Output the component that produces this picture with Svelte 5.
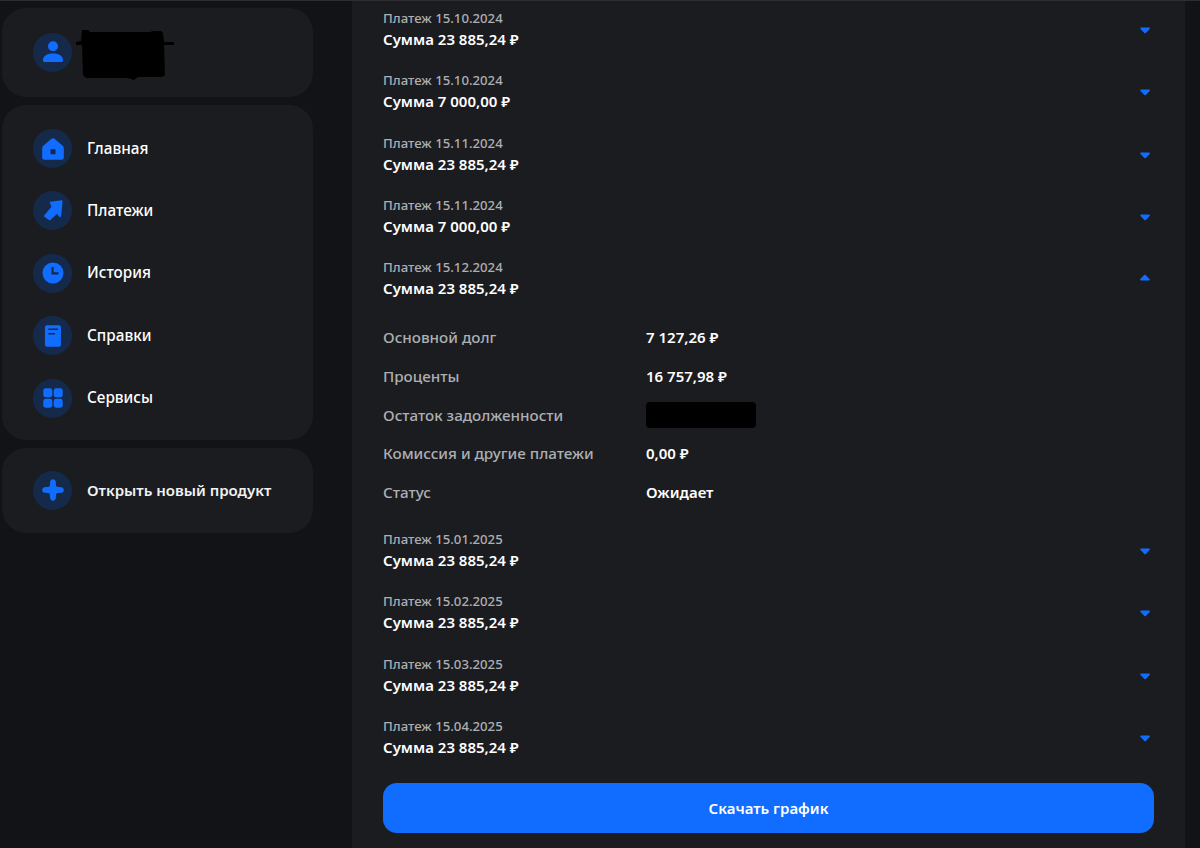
<script>
    const nav = [
        { label: 'Главная', icon: 'home' },
        { label: 'Платежи', icon: 'arrow' },
        { label: 'История', icon: 'clock' },
        { label: 'Справки', icon: 'doc' },
        { label: 'Сервисы', icon: 'grid' }
    ];

    const before = [
        ['15.10.2024', '23 885,24'],
        ['15.10.2024', '7 000,00'],
        ['15.11.2024', '23 885,24'],
        ['15.11.2024', '7 000,00']
    ];

    const after = [
        ['15.01.2025', '23 885,24'],
        ['15.02.2025', '23 885,24'],
        ['15.03.2025', '23 885,24'],
        ['15.04.2025', '23 885,24']
    ];
</script>

{#snippet icon(name)}
    <span class="badge">
        <svg viewBox="0 0 24 24" width="24" height="24">
            {#if name === 'user'}
                <circle cx="12" cy="5.200" r="5" />
                <path d="M2 19.200c0-4.200 4-6.700 10-6.700s10 2.500 10 6.700c0 1-.7 1.800-1.700 1.800H3.700C2.700 21 2 20.200 2 19.200z" />
            {:else if name === 'home'}
                <path fill-rule="evenodd" d="M10.500 1.800a2.300 2.300 0 0 1 3 0l7.900 6.800c.9.700 1.400 1.700 1.400 2.800v9c0 1.300-1 2.300-2.300 2.300H3.500c-1.300 0-2.300-1-2.300-2.300v-9c0-1.100.5-2.100 1.400-2.800zM9.500 12.200v5h5v-5z" />
            {:else if name === 'arrow'}
                <polygon class="rounded" points="9.500,3.500 20.800,2 19.300,17.500 15.800,13.800 8.800,20.500 3.800,17 11.500,7.800" />
            {:else if name === 'clock'}
                <path fill-rule="evenodd" d="M12 1.500a10.500 10.500 0 1 1 0 21 10.500 10.500 0 0 1 0-21zM10.500 6v7.500h7v-2.200h-4.800V6z" />
            {:else if name === 'doc'}
                <path fill-rule="evenodd" d="M6 1.200h12c1.200 0 2 .8 2 2v17.600c0 1.200-.8 2-2 2H6c-1.200 0-2-.8-2-2V3.200c0-1.200.8-2 2-2zM7.300 4.600v1.500H17V4.600zm0 4.300v1.500H14V8.900z" />
            {:else if name === 'grid'}
                <rect x="2.300" y="2.300" width="9" height="9" rx="2.400" />
                <rect x="12.700" y="2.300" width="9" height="9" rx="2.400" />
                <rect x="2.300" y="12.700" width="9" height="9" rx="2.400" />
                <rect x="12.700" y="12.700" width="9" height="9" rx="2.400" />
            {:else if name === 'plus'}
                <path d="M12 1.200c1.400 0 2.600 1 2.800 2.500.2 2.800.3 4.300.7 4.800.5.400 2 .5 4.800.7 1.500.2 2.500 1.300 2.500 2.800s-1 2.600-2.500 2.800c-2.800.2-4.300.3-4.800.7-.4.500-.5 2-.7 4.800-.2 1.500-1.300 2.500-2.800 2.500s-2.600-1-2.800-2.500c-.2-2.800-.3-4.300-.7-4.800-.5-.4-2-.5-4.800-.7-1.500-.2-2.500-1.300-2.500-2.800s1-2.600 2.500-2.800c2.800-.2 4.300-.3 4.800-.7.400-.5.500-2 .7-4.800.2-1.500 1.300-2.500 2.800-2.500z" />
            {/if}
        </svg>
    </span>
{/snippet}

{#snippet payment(date, sum, open)}
    <div class="payment">
        <div>
            <div class="date">Платеж {date}</div>
            <div class="sum">Сумма {sum} ₽</div>
        </div>
        <svg class="chevron" class:open viewBox="0 0 20 20" width="20" height="20">
            <path d="M6 7.500h8c.8 0 1.200.9.700 1.500l-3.900 4c-.4.400-1 .400-1.400 0L5.500 9c-.5-.6-.1-1.500.5-1.500z" />
        </svg>
    </div>
{/snippet}

<div class="page">
    <aside class="sidebar">
        <section class="card profile">
            {@render icon('user')}
            <svg class="scribble" viewBox="0 0 98 52" width="98" height="52">
                <path d="M6 1h6l2 2h60l3-1h8l2 2 1 9h10v3H88l1 30-3 2H62l-4 3-6-2H10l-3-3-1-30H0v-3l5-1z" />
            </svg>
        </section>

        <nav class="card menu">
            {#each nav as item}
                <div class="nav-item">
                    {@render icon(item.icon)}
                    <span class="nav-label">{item.label}</span>
                </div>
            {/each}
        </nav>

        <section class="card promo">
            <div class="nav-item">
                {@render icon('plus')}
                <span>Открыть новый продукт</span>
            </div>
        </section>
    </aside>

    <main class="panel">
        {#each before as p}
            {@render payment(p[0], p[1], false)}
        {/each}

        {@render payment('15.12.2024', '23 885,24', true)}

        <div class="details">
            <div class="detail"><span>Основной долг</span><b>7 127,26 ₽</b></div>
            <div class="detail"><span>Проценты</span><b>16 757,98 ₽</b></div>
            <div class="detail"><span>Остаток задолженности</span><i class="hidden-value"></i></div>
            <div class="detail"><span>Комиссия и другие платежи</span><b>0,00 ₽</b></div>
            <div class="detail"><span>Статус</span><b>Ожидает</b></div>
        </div>

        {#each after as p}
            {@render payment(p[0], p[1], false)}
        {/each}

        <button class="download">Скачать график</button>
    </main>
</div>

<style>
    :global(body) {
        background: #111317;
        font-family: "Noto Sans", "Open Sans", sans-serif;
        color: #fff;
    }

    .page {
        display: flex;
        height: 848px;
        overflow: hidden;
        border-top: 1px solid #2d2f33;
        box-sizing: border-box;
    }

    .sidebar {
        width: 311px;
        margin: 7px 39px 0 2px;
        display: flex;
        flex-direction: column;
        gap: 8px;
    }

    .card {
        background: #1b1c20;
        border-radius: 24px;
        padding-left: 31px;
    }

    .profile {
        height: 89px;
        display: flex;
        align-items: center;
        position: relative;
    }

    .scribble {
        position: absolute;
        left: 74px;
        top: 21px;
        fill: #000;
    }

    .menu {
        display: flex;
        flex-direction: column;
        gap: 23.4px;
        padding-top: 24px;
        padding-bottom: 22px;
    }

    .promo {
        height: 85px;
        display: flex;
        align-items: center;
    }

    .nav-item {
        display: flex;
        align-items: center;
        gap: 15px;
        font-size: 15.3px;
        font-weight: 500;
    }

    .nav-label {
        padding-bottom: 2px;
    }

    .promo .nav-item {
        font-size: 15px;
        font-weight: 600;
        color: #f2f2f3;
    }

    .badge {
        width: 39px;
        height: 39px;
        flex: none;
        border-radius: 50%;
        background: #152a4b;
        display: flex;
        align-items: center;
        justify-content: center;
        fill: #116dff;
    }

    .rounded {
        stroke: #116dff;
        stroke-width: 1.6;
        stroke-linejoin: round;
    }

    .panel {
        width: 771px;
        height: 847px;
        padding: 7px 31px 0 31px;
        background: #1b1c20;
    }

    .payment {
        display: flex;
        justify-content: space-between;
        align-items: center;
        margin-bottom: 20.33px;
    }

    .date {
        font-size: 13.2px;
        line-height: 20px;
        color: #adafb2;
        font-weight: 500;
    }

    .sum {
        font-size: 15px;
        line-height: 22px;
        font-weight: 600;
    }

    .chevron {
        fill: #116dff;
        margin-right: -1px;
        transform: translateY(1px);
    }

    .chevron.open {
        transform: rotate(180deg);
    }

    .details {
        margin-top: -2px;
        margin-bottom: 17.5px;
    }

    .detail {
        display: flex;
        align-items: center;
        height: 38.8px;
        font-size: 15.2px;
        font-weight: 500;
        color: #adafb2;
    }

    .detail span {
        width: 263px;
    }

    .detail b {
        font-size: 15px;
        font-weight: 600;
        color: #fff;
    }

    .hidden-value {
        width: 110px;
        height: 26px;
        margin-top: 1px;
        background: #000;
        border-radius: 4px;
    }

    .download {
        display: block;
        width: 100%;
        height: 50px;
        margin-top: 24.5px;
        border: none;
        border-radius: 14px;
        background: #116dff;
        color: #fff;
        font-family: inherit;
        font-size: 15px;
        font-weight: 600;
    }
</style>
